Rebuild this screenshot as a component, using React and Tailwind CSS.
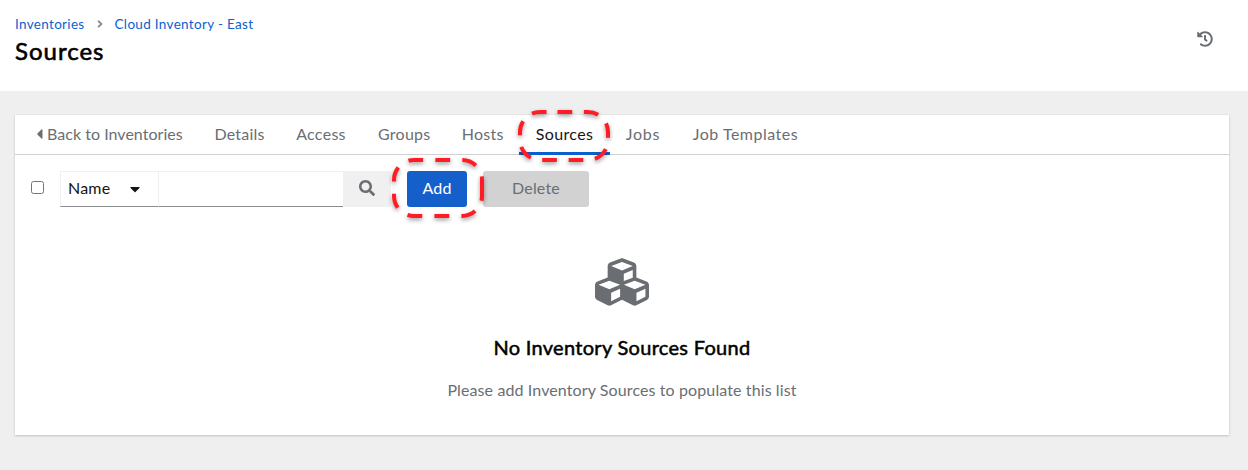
import { FaAngleRight, FaCaretDown, FaCaretLeft, FaCubes, FaHistory, FaSearch } from "react-icons/fa";

const tabs = [
  { label: "Details", width: "w-[81px]", tracking: "tracking-[0.2px]" },
  { label: "Access", width: "w-[82px]", tracking: "tracking-[0.3px]" },
  { label: "Groups", width: "w-[84.5px]", tracking: "tracking-[0.25px]" },
  { label: "Hosts", width: "w-[72.5px]", tracking: "tracking-[0.25px]" },
  { label: "Sources", width: "w-[91px]", tracking: "tracking-[0.35px]", active: true },
  { label: "Jobs", width: "w-[66px]", tracking: "tracking-[0.8px]" },
  { label: "Job Templates", width: "w-[139px]", tracking: "tracking-[0.5px]" },
];

function Header() {
  return (
    <header className="flex h-[91px] items-start justify-between bg-white pl-[15px] pr-[35px]">
      <div>
        <nav className="mt-[15px] flex h-[18px] items-center text-[13.5px] tracking-[0.32px] text-[#0b5fce]">
          <a>Inventories</a>
          <FaAngleRight className="mx-[9px] size-[12px] text-[#8a8d90]" />
          <a>Cloud Inventory - East</a>
        </nav>
        <h1 className="mt-[2px] text-[24px] leading-[32px] font-normal tracking-[1px] text-black [-webkit-text-stroke:0.6px]">Sources</h1>
      </div>
      <FaHistory className="mt-[31px] size-[16px] text-[#6a6e73]" />
    </header>
  );
}

function TabBar() {
  return (
    <nav className="flex h-10 border-b border-[#d2d2d2] pl-[5px] text-[16px] text-[#6a6e73]">
      <a className="flex h-[38px] w-[179px] items-center pl-[14px] whitespace-nowrap">
        <FaCaretLeft className="mr-[2px] h-[16px] w-[11px]" />
        <span className="tracking-[0.03px]">Back to Inventories</span>
      </a>
      {tabs.map((t) => (
        <a
          key={t.label}
          className={
            "flex h-10 items-center justify-center whitespace-nowrap " +
            t.tracking +
            " " +
            t.width +
            (t.active ? " border-b-[3px] border-[#0b5fce] text-[#151515]" : " pb-[2px]")
          }
        >
          {t.label}
        </a>
      ))}
    </nav>
  );
}

function Toolbar() {
  return (
    <div className="mt-4 flex h-9 items-center pl-4 text-[16px]">
      <input type="checkbox" className="mb-[3px] size-[13px] appearance-none rounded-[2.5px] border border-[#767676] bg-white" />
      <div className="ml-[16px] flex h-9 w-[99px] items-center justify-between border border-[#f0f0f0] border-b-[#8a8d90] pr-[17px] pl-[7px] text-[#151515]">
        <span className="pb-[2px] tracking-[0.2px]">Name</span>
        <FaCaretDown className="mb-[1px] h-[16px] w-[12px]" />
      </div>
      <div className="h-9 w-[184px] border-t border-b border-t-[#f0f0f0] border-b-[#8a8d90] bg-white" />
      <button className="flex h-9 w-[48px] items-center justify-center bg-[#f0f0f0] pb-[2px] text-[#6a6e73]">
        <FaSearch className="size-4" />
      </button>
      <button className="ml-4 h-9 w-[60px] rounded-[3px] bg-[#155fcb] pb-[2px] tracking-[0.2px] text-white">Add</button>
      <button className="ml-4 h-9 w-[106px] rounded-[3px] bg-[#d2d2d2] pb-[2px] tracking-[0.2px] text-[#6a6e73]">Delete</button>
    </div>
  );
}

function EmptyState() {
  return (
    <div className="flex flex-col items-center pt-[48px]">
      <FaCubes className="size-[54px] text-[#6a6e73]" />
      <h2 className="mt-[23px] text-[20px] leading-[30px] tracking-[0.3px] text-black [-webkit-text-stroke:0.5px]">No Inventory Sources Found</h2>
      <p className="mt-[16px] text-[16px] leading-6 tracking-[0.11px] text-[#6a6e73]">Please add Inventory Sources to populate this list</p>
    </div>
  );
}

function Highlights() {
  return (
    <svg
      className="pointer-events-none absolute inset-0 h-[470px] w-[1248px] drop-shadow-[0_2px_2px_rgba(0,0,0,0.4)]"
      viewBox="0 0 1248 470"
      fill="none"
      stroke="#ff1c24"
      strokeWidth="4"
    >
      <path
        strokeDasharray="14.7 11.7"
        d="M557.5 112H588A20 20 0 0 1 608 132V140A20 20 0 0 1 588 160H540A20 20 0 0 1 520 140V132A20 20 0 0 1 540 112Z"
      />
      <path
        strokeDasharray="14.8 12.2"
        d="M482 186V196A20 20 0 0 1 462 216H414A20 20 0 0 1 394 196V180A20 20 0 0 1 414 160H462A20 20 0 0 1 482 180V186"
      />
    </svg>
  );
}

export default function App() {
  return (
    <div className="relative h-[470px] w-[1248px] overflow-hidden bg-[#efefef] font-['Lato',sans-serif]">
      <Header />
      <main className="mt-6 ml-[15px] h-[320px] w-[1214px] bg-white shadow-[0_1px_2px_rgba(3,3,3,0.16),0_0_2px_rgba(3,3,3,0.08)]">
        <TabBar />
        <Toolbar />
        <EmptyState />
      </main>
      <Highlights />
    </div>
  );
}
